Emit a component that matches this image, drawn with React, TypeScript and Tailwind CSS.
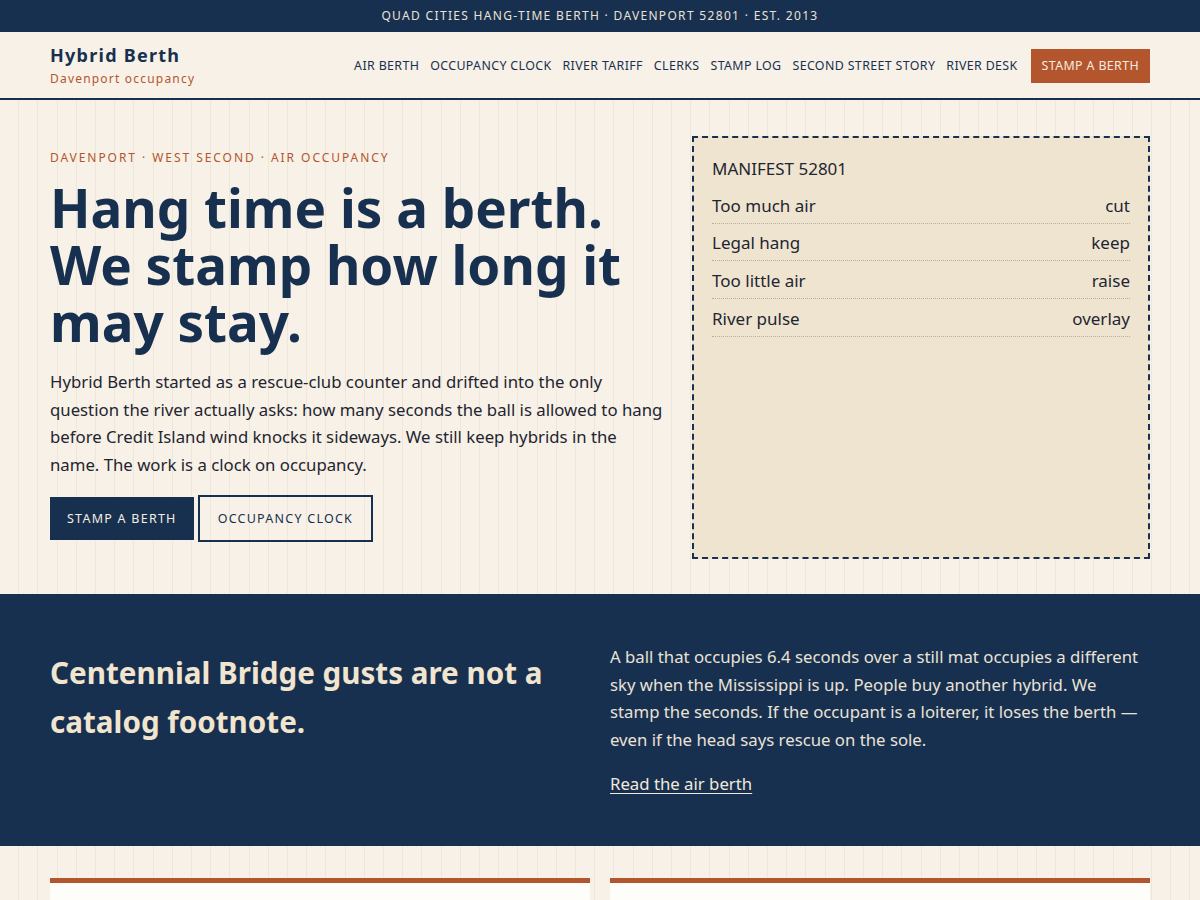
import React from 'react';

const navLinks = [
  'Air Berth',
  'Occupancy Clock',
  'River Tariff',
  'Clerks',
  'Stamp Log',
  'Second Street Story',
  'River Desk',
];

const manifest = [
  { label: 'Too much air', action: 'cut' },
  { label: 'Legal hang', action: 'keep' },
  { label: 'Too little air', action: 'raise' },
  { label: 'River pulse', action: 'overlay' },
];

export default function App() {
  return (
    <div className="min-h-screen bg-[#f7f1e7] bg-[repeating-linear-gradient(90deg,transparent_0_18.2px,rgba(120,90,50,0.07)_18.2px_19.2px)] font-['Noto_Sans',sans-serif] text-[#1f2a37]">
      {/* top strip */}
      <div className="h-8 bg-[#18304f] flex items-center justify-center text-[12px] tracking-[0.11em] text-[#e9e2d4]">
        QUAD CITIES HANG-TIME BERTH · DAVENPORT 52801 · EST. 2013
      </div>

      {/* header */}
      <header className="bg-[#f7f1e7] border-b-2 border-[#18304f]">
        <div className="max-w-[1100px] mx-auto h-[66px] flex items-center justify-between">
          <div className="flex flex-col">
            <span className="text-[18px] leading-[24px] font-bold tracking-[0.07em] text-[#18304f]">Hybrid Berth</span>
            <span className="text-[12px] leading-[18px] tracking-[0.1em] text-[#b4562d] mt-[3px]">Davenport occupancy</span>
          </div>
          <nav className="flex items-center gap-[11px] pt-[2px]">
            {navLinks.map((l) => (
              <a key={l} href="#" className="text-[12.4px] tracking-[0.03em] uppercase text-[#18304f]">
                {l}
              </a>
            ))}
            <a href="#" className="ml-[2px] h-[34px] px-[11px] flex items-center bg-[#b4562d] text-[12.4px] tracking-[0.03em] text-[#f7ece0]">
              STAMP A BERTH
            </a>
          </nav>
        </div>
      </header>

      {/* hero */}
      <section className="max-w-[1100px] mx-auto pt-[36px] pb-[35px] grid grid-cols-[614px_458px] gap-[28px]">
        <div className="pt-[13px]">
          <p className="text-[12px] tracking-[0.162em] text-[#b4562d] uppercase">Davenport · West Second · Air Occupancy</p>
          <h1 className="mt-[12px] text-[53px] leading-[57px] font-bold text-[#18304f]">
            Hang time is a berth. We stamp how long it may stay.
          </h1>
          <p className="mt-[18px] text-[16.75px] leading-[27.6px] text-[#1f2530]">
            Hybrid Berth started as a rescue-club counter and drifted into the only question the river actually asks: how many seconds the ball is allowed to hang before Credit Island wind knocks it sideways. We still keep hybrids in the name. The work is a clock on occupancy.
          </p>
          <div className="mt-[17px] flex items-center gap-[4px]">
            <a href="#" className="h-[43px] px-[17px] flex items-center bg-[#18304f] text-[12.5px] tracking-[0.1em] text-[#f3ede2]">
              STAMP A BERTH
            </a>
            <a href="#" className="h-[47px] px-[18px] flex items-center border-2 border-[#18304f] text-[12.5px] tracking-[0.1em] text-[#18304f]">
              OCCUPANCY CLOCK
            </a>
          </div>
        </div>
        <div className="h-[423px] border-2 border-dashed border-[#18304f] bg-[#eee4d0] px-[18px] pt-[19px]">
          <div className="text-[17px] leading-[24px] text-[#1f2530]">MANIFEST 52801</div>
          <div className="mt-[5px]">
            {manifest.map((m) => (
              <div key={m.label} className="flex justify-between items-center h-[37.7px] pt-[2px] border-b border-dotted border-[#b9ad98] text-[17px] text-[#1f2530]">
                <span>{m.label}</span>
                <span>{m.action}</span>
              </div>
            ))}
          </div>
        </div>
      </section>

      {/* river band */}
      <section className="bg-[#18304f]">
        <div className="max-w-[1100px] mx-auto pt-[49px] pb-[50px] grid grid-cols-2 gap-5">
          <h2 className="pt-[5px] text-[29.6px] leading-[49px] font-bold text-[#f1e5cf]">
            Centennial Bridge gusts are not a catalog footnote.
          </h2>
          <div>
            <p className="text-[16.75px] leading-[27.5px] text-[#e9e2d6]">
              A ball that occupies 6.4 seconds over a still mat occupies a different sky when the Mississippi is up. People buy another hybrid. We stamp the seconds. If the occupant is a loiterer, it loses the berth — even if the head says rescue on the sole.
            </p>
            <a href="#" className="inline-block mt-[19px] text-[16.75px] leading-[24px] underline underline-offset-[3px] text-[#f1e9dc]">
              Read the air berth
            </a>
          </div>
        </div>
      </section>

      {/* cards */}
      <section className="max-w-[1100px] mx-auto pt-[32px] grid grid-cols-2 gap-5">
        <div className="h-[200px] bg-[#fffdf9] border-t-[5px] border-[#b4562d]" />
        <div className="h-[200px] bg-[#fffdf9] border-t-[5px] border-[#b4562d]" />
      </section>
    </div>
  );
}
